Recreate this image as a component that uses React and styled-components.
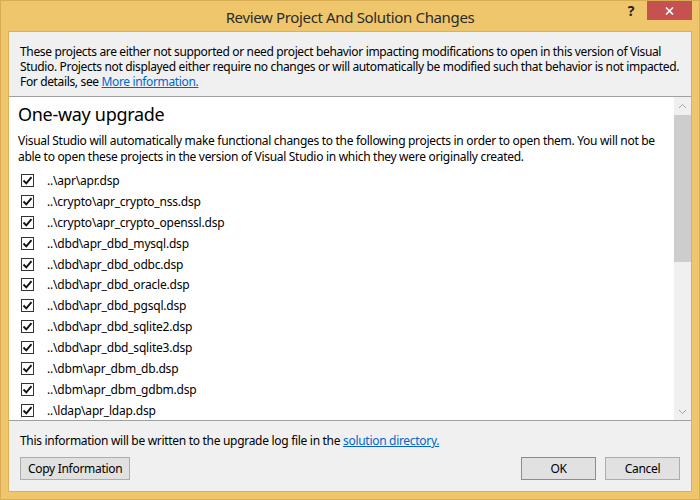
import React from "react";
import styled, { createGlobalStyle } from "styled-components";

const GlobalStyle = createGlobalStyle`
html, body {
    margin: 0;
    padding: 0;
    background: #ffffff;
}
* {
    box-sizing: border-box;
}
`

const FONT = `"Noto Sans", "Open Sans", sans-serif`

const projects = [
    "..\\apr\\apr.dsp",
    "..\\crypto\\apr_crypto_nss.dsp",
    "..\\crypto\\apr_crypto_openssl.dsp",
    "..\\dbd\\apr_dbd_mysql.dsp",
    "..\\dbd\\apr_dbd_odbc.dsp",
    "..\\dbd\\apr_dbd_oracle.dsp",
    "..\\dbd\\apr_dbd_pgsql.dsp",
    "..\\dbd\\apr_dbd_sqlite2.dsp",
    "..\\dbd\\apr_dbd_sqlite3.dsp",
    "..\\dbm\\apr_dbm_db.dsp",
    "..\\dbm\\apr_dbm_gdbm.dsp",
    "..\\ldap\\apr_ldap.dsp",
]

const Window = styled.div`
display: flex;
flex-flow: column;
width: 700px;
height: 500px;
background: #efc66c;
border: 1px solid #d8ad55;
font-family: ${FONT};
color: #000;
`

const TitleBar = styled.div`
display: grid;
grid-template-columns: 1fr auto 1fr;
align-items: start;
height: 30px;
flex-shrink: 0;
`

const Title = styled.div`
grid-column: 2;
padding-top: 6px;
font-size: 15px;
color: #2b2b2b;
letter-spacing: -0.35px;
`

const Controls = styled.div`
grid-column: 3;
display: flex;
justify-content: flex-end;
align-items: center;
padding-right: 7px;
`

const HelpButton = styled.div`
width: 26px;
height: 19px;
display: flex;
align-items: center;
justify-content: center;
font-weight: bold;
font-size: 14px;
color: #222;
margin-right: 3px;
`

const CloseButton = styled.div`
width: 45px;
height: 19px;
background: #c75050;
display: flex;
align-items: center;
justify-content: center;
`

const Body = styled.div`
flex: 1;
display: flex;
flex-flow: column;
margin: 0 7px 7px 7px;
border: 1px solid #dbb05a;
background: #f0f0f0;
min-height: 0;
`

const Notice = styled.div`
padding: 12px 11px 7px 11px;
font-size: 12px;
line-height: 15px;
border-bottom: 1px solid #a0a0a0;
letter-spacing: -0.35px;
white-space: nowrap;
flex-shrink: 0;
`

const Link = styled.a`
color: #0066cc;
text-decoration: underline;
cursor: pointer;
`

const ListPane = styled.div`
flex: 1;
display: flex;
background: #ffffff;
border-bottom: 1px solid #a0a0a0;
min-height: 0;
overflow: hidden;
`

const ListContent = styled.div`
flex: 1;
padding: 5px 9px 0 9px;
overflow: hidden;
`

const Heading = styled.div`
font-size: 18px;
line-height: 24px;
letter-spacing: -0.3px;
margin-bottom: 7px;
`

const Description = styled.div`
font-size: 12px;
line-height: 16px;
letter-spacing: -0.3px;
white-space: nowrap;
margin-bottom: 5px;
`

const ItemRow = styled.div`
display: flex;
align-items: center;
height: 20.9px;
padding-left: 3px;
font-size: 12px;
letter-spacing: -0.2px;
`

const CheckBox = styled.div`
width: 13px;
height: 13px;
border: 1px solid #333;
background: #fff;
display: flex;
align-items: center;
justify-content: center;
margin-right: 13px;
flex-shrink: 0;
`

const ScrollBar = styled.div`
width: 17px;
display: flex;
flex-flow: column;
background: #f0f0f0;
flex-shrink: 0;
`

const ScrollArrow = styled.div`
height: 17px;
display: flex;
align-items: center;
justify-content: center;
flex-shrink: 0;
`

const ScrollTrack = styled.div`
flex: 1;
display: flex;
flex-flow: column;
`

const ScrollThumb = styled.div`
background: #cdcdcd;
height: ${p => p.size}px;
margin-top: ${p => p.offset}px;
`

const Footer = styled.div`
display: flex;
flex-flow: column;
padding: 12px 11px 11px 11px;
font-size: 12px;
letter-spacing: -0.3px;
flex-shrink: 0;
`

const FooterText = styled.div`
line-height: 16px;
margin-bottom: 8px;
`

const ButtonRow = styled.div`
display: flex;
align-items: center;
gap: 9px;
`

const Spacer = styled.div`
flex: 1;
`

const Button = styled.button`
height: 23px;
min-width: ${p => p.wide ? "auto" : "75px"};
padding: 0 ${p => p.wide ? "7px" : "0"};
font-family: ${FONT};
font-size: 12px;
letter-spacing: -0.3px;
color: #000;
background: #e1e1e1;
border: 1px solid ${p => p.primary ? "#4f9ae0" : "#adadad"};
border-radius: 0;
outline: none;
`

const Check = () => (
    <svg width="11" height="11" viewBox="0 0 11 11">
        <path d="M1.5 5.5 L4.3 8.3 L9.5 2.2" fill="none" stroke="#111" strokeWidth="1.9" />
    </svg>
)

const Chevron = ({ up }) => (
    <svg width="9" height="6" viewBox="0 0 9 6">
        <path d={up ? "M1 5 L4.5 1.5 L8 5" : "M1 1 L4.5 4.5 L8 1"} fill="none" stroke="#a3a3a3" strokeWidth="1" />
    </svg>
)

export default function App() {
    return (
        <>
            <GlobalStyle />
            <Window>
                <TitleBar>
                    <Title>Review Project And Solution Changes</Title>
                    <Controls>
                        <HelpButton>?</HelpButton>
                        <CloseButton>
                            <svg width="9" height="8" viewBox="0 0 9 8">
                                <path d="M1 0.5 L8 7.5 M8 0.5 L1 7.5" stroke="#fff" strokeWidth="1.6" />
                            </svg>
                        </CloseButton>
                    </Controls>
                </TitleBar>
                <Body>
                    <Notice>
                        These projects are either not supported or need project behavior impacting modifications to open in this version of Visual<br />
                        Studio. Projects not displayed either require no changes or will automatically be modified such that behavior is not impacted.<br />
                        For details, see <Link>More information.</Link>
                    </Notice>
                    <ListPane>
                        <ListContent>
                            <Heading>One-way upgrade</Heading>
                            <Description>
                                Visual Studio will automatically make functional changes to the following projects in order to open them. You will not be<br />
                                able to open these projects in the version of Visual Studio in which they were originally created.
                            </Description>
                            {projects.map(p => (
                                <ItemRow key={p}>
                                    <CheckBox><Check /></CheckBox>
                                    {p}
                                </ItemRow>
                            ))}
                        </ListContent>
                        <ScrollBar>
                            <ScrollArrow><Chevron up /></ScrollArrow>
                            <ScrollTrack>
                                <ScrollThumb offset={1} size={147} />
                            </ScrollTrack>
                            <ScrollArrow><Chevron /></ScrollArrow>
                        </ScrollBar>
                    </ListPane>
                    <Footer>
                        <FooterText>
                            This information will be written to the upgrade log file in the <Link>solution directory.</Link>
                        </FooterText>
                        <ButtonRow>
                            <Button wide>Copy Information</Button>
                            <Spacer />
                            <Button primary>OK</Button>
                            <Button>Cancel</Button>
                        </ButtonRow>
                    </Footer>
                </Body>
            </Window>
        </>
    )
}
